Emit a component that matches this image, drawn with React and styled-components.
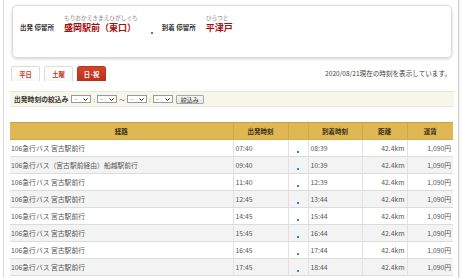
import React from "react";
import styled, { createGlobalStyle } from "styled-components";

const GlobalStyle = createGlobalStyle`
  body {
    margin: 0;
    background: #fff;
    font-family: "Noto Sans CJK JP", "Noto Sans", sans-serif;
    color: #444;
  }
`;

const rows = [
  { route: "106急行バス 宮古駅前行", dep: "07:40", arr: "08:39" },
  { route: "106急行バス（宮古駅前経由）船越駅前行", dep: "09:40", arr: "10:39" },
  { route: "106急行バス 宮古駅前行", dep: "11:40", arr: "12:39" },
  { route: "106急行バス 宮古駅前行", dep: "12:45", arr: "13:44" },
  { route: "106急行バス 宮古駅前行", dep: "14:45", arr: "15:44" },
  { route: "106急行バス 宮古駅前行", dep: "15:45", arr: "16:44" },
  { route: "106急行バス 宮古駅前行", dep: "16:45", arr: "17:44" },
  { route: "106急行バス 宮古駅前行", dep: "17:45", arr: "18:44" },
];

function Select() {
  return (
    <SelectBox>
      <span>--</span>
      <svg width="5" height="3" viewBox="0 0 5 3">
        <path d="M0.5 0.5 L2.5 2.5 L4.5 0.5" stroke="#222" strokeWidth="1" fill="none" />
      </svg>
    </SelectBox>
  );
}

export default function App() {
  return (
    <>
      <GlobalStyle />
      <Page>
        <StopCard>
          <StopBlock>
            <StopLabel>出発 停留所</StopLabel>
            <StopName>
              <Ruby>もりおかえきまえひがしぐち</Ruby>
              <Name>盛岡駅前（東口）</Name>
            </StopName>
          </StopBlock>
          <Dot $card />
          <StopBlock>
            <StopLabel>到着 停留所</StopLabel>
            <StopName>
              <Ruby>ひらつと</Ruby>
              <Name>平津戸</Name>
            </StopName>
          </StopBlock>
        </StopCard>

        <TabRow>
          <Tabs>
            <Tab>平日</Tab>
            <Tab>土曜</Tab>
            <Tab $active>日･祝</Tab>
          </Tabs>
          <Notice>2020/08/21現在の時刻を表示しています。</Notice>
        </TabRow>

        <FilterBar>
          <FilterLabel>出発時刻の絞込み</FilterLabel>
          <Select />
          <Sep>:</Sep>
          <Select />
          <Sep>〜</Sep>
          <Select />
          <Sep>:</Sep>
          <Select />
          <FilterButton>絞込み</FilterButton>
        </FilterBar>

        <Table>
          <colgroup>
            <col style={{ width: 223 }} />
            <col style={{ width: 55 }} />
            <col style={{ width: 20 }} />
            <col style={{ width: 54 }} />
            <col style={{ width: 45 }} />
            <col style={{ width: 46 }} />
          </colgroup>
          <thead>
            <tr>
              <Th>経路</Th>
              <Th>出発時刻</Th>
              <Th />
              <Th>到着時刻</Th>
              <Th>距離</Th>
              <Th>運賃</Th>
            </tr>
          </thead>
          <tbody>
            {rows.map((r, i) => (
              <Tr key={i} $alt={i % 2 === 1}>
                <Td>{r.route}</Td>
                <Td>{r.dep}</Td>
                <Td $center>
                  <Dot />
                </Td>
                <Td>{r.arr}</Td>
                <Td $right>42.4km</Td>
                <Td $right>1,090円</Td>
              </Tr>
            ))}
          </tbody>
        </Table>
      </Page>
    </>
  );
}

const Page = styled.div`
  margin-left: 3px;
  width: 456px;
  min-height: 278px;
  box-sizing: border-box;
  border-left: 1px solid #dcdcdc;
  border-right: 1px solid #d0d0d0;
  box-shadow: 1px 0 2px rgba(0, 0, 0, 0.08);
  padding: 5px 4px 0 6px;
`;

const StopCard = styled.div`
  margin: 0 2px;
  height: 53px;
  box-sizing: border-box;
  border: 1px solid #dadada;
  border-radius: 5px;
  box-shadow: 0 1px 3px rgba(0, 0, 0, 0.18);
  padding: 8px 7px 0;
  display: flex;
  align-items: flex-start;
`;

const StopBlock = styled.div`
  display: flex;
  align-items: flex-end;
  gap: 10px;
`;

const StopLabel = styled.div`
  font-size: 6.5px;
  font-weight: bold;
  color: #333;
  line-height: 11px;
  white-space: nowrap;
`;

const StopName = styled.div`
  display: flex;
  flex-direction: column;
  gap: 1px;
`;

const Ruby = styled.div`
  font-size: 5.7px;
  line-height: 7px;
  color: #888;
  white-space: nowrap;
`;

const Name = styled.div`
  font-size: 9px;
  line-height: 11px;
  font-weight: bold;
  color: #a40f0f;
  white-space: nowrap;
`;

const Dot = styled.span`
  display: inline-block;
  flex: none;
  width: 2px;
  height: 2px;
  background: #2a8cc8;
  margin: ${(p) => (p.$card ? "18px 9px 0 13px" : "6px 0 0 0")};
  vertical-align: middle;
`;

const TabRow = styled.div`
  margin-top: 8px;
  display: flex;
  align-items: flex-end;
  justify-content: space-between;
`;

const Tabs = styled.div`
  display: flex;
  gap: 4px;
  padding-left: 1px;
`;

const Tab = styled.div`
  width: 29px;
  height: 15px;
  box-sizing: border-box;
  border: 1px solid ${(p) => (p.$active ? "#b8341c" : "#dcdcdc")};
  border-bottom: none;
  border-radius: 3px 3px 0 0;
  background: ${(p) =>
    p.$active ? "linear-gradient(#d2452a, #b9301a)" : "linear-gradient(#fff, #f8f8f8)"};
  color: ${(p) => (p.$active ? "#fff" : "#c0392b")};
  font-size: 6.3px;
  font-weight: bold;
  display: flex;
  align-items: center;
  justify-content: center;
`;

const Notice = styled.div`
  font-size: 6.6px;
  color: #444;
  line-height: 9px;
  margin: 0 3px 3px 0;
  white-space: nowrap;
`;

const FilterBar = styled.div`
  margin-top: 10px;
  height: 16px;
  box-sizing: border-box;
  background: #f6f6ea;
  border-top: 1px solid #e8e8dc;
  border-bottom: 1px solid #e8e8dc;
  display: flex;
  align-items: center;
  padding-left: 4px;
  gap: 2px;
`;

const FilterLabel = styled.span`
  font-size: 6.8px;
  font-weight: bold;
  color: #333;
  margin-right: 1px;
  white-space: nowrap;
`;

const SelectBox = styled.span`
  width: 20px;
  height: 8px;
  box-sizing: border-box;
  border: 1px solid #9a9a9a;
  background: #fff;
  display: flex;
  align-items: center;
  justify-content: space-between;
  padding: 0 2px;
  font-size: 5px;
  line-height: 6px;
  color: #555;
`;

const Sep = styled.span`
  font-size: 6px;
  color: #666;
`;

const FilterButton = styled.span`
  margin-left: 1px;
  width: 28px;
  height: 9px;
  box-sizing: border-box;
  border: 1px solid #a8a8a8;
  border-radius: 1px;
  background: linear-gradient(#f6f6f6, #e4e4e4);
  font-size: 6px;
  color: #333;
  display: flex;
  align-items: center;
  justify-content: center;
`;

const Table = styled.table`
  margin-top: 15px;
  width: 443px;
  border-collapse: collapse;
  table-layout: fixed;
  font-size: 6.8px;
  color: #555;
`;

const Th = styled.th`
  height: 16px;
  padding: 0;
  background: #dfb853;
  border-top: 1px solid #c9a043;
  border-left: 1px solid #cfa84a;
  border-bottom: 1px solid #d1ab4c;
  font-weight: bold;
  color: #3a3020;
  font-size: 6.5px;
  text-align: center;
  &:first-child {
    border-left: none;
  }
`;

const Tr = styled.tr`
  background: ${(p) => (p.$alt ? "#f3f3f3" : "#fff")};
`;

const Td = styled.td`
  height: 16px;
  padding: 0 2px 0 2px;
  border-bottom: 1px solid #dcdcdc;
  border-left: 1px solid #e2e2e2;
  text-align: ${(p) => (p.$right ? "right" : p.$center ? "center" : "left")};
  white-space: nowrap;
  overflow: hidden;
  &:first-child {
    border-left: none;
    padding-left: 1px;
  }
`;
